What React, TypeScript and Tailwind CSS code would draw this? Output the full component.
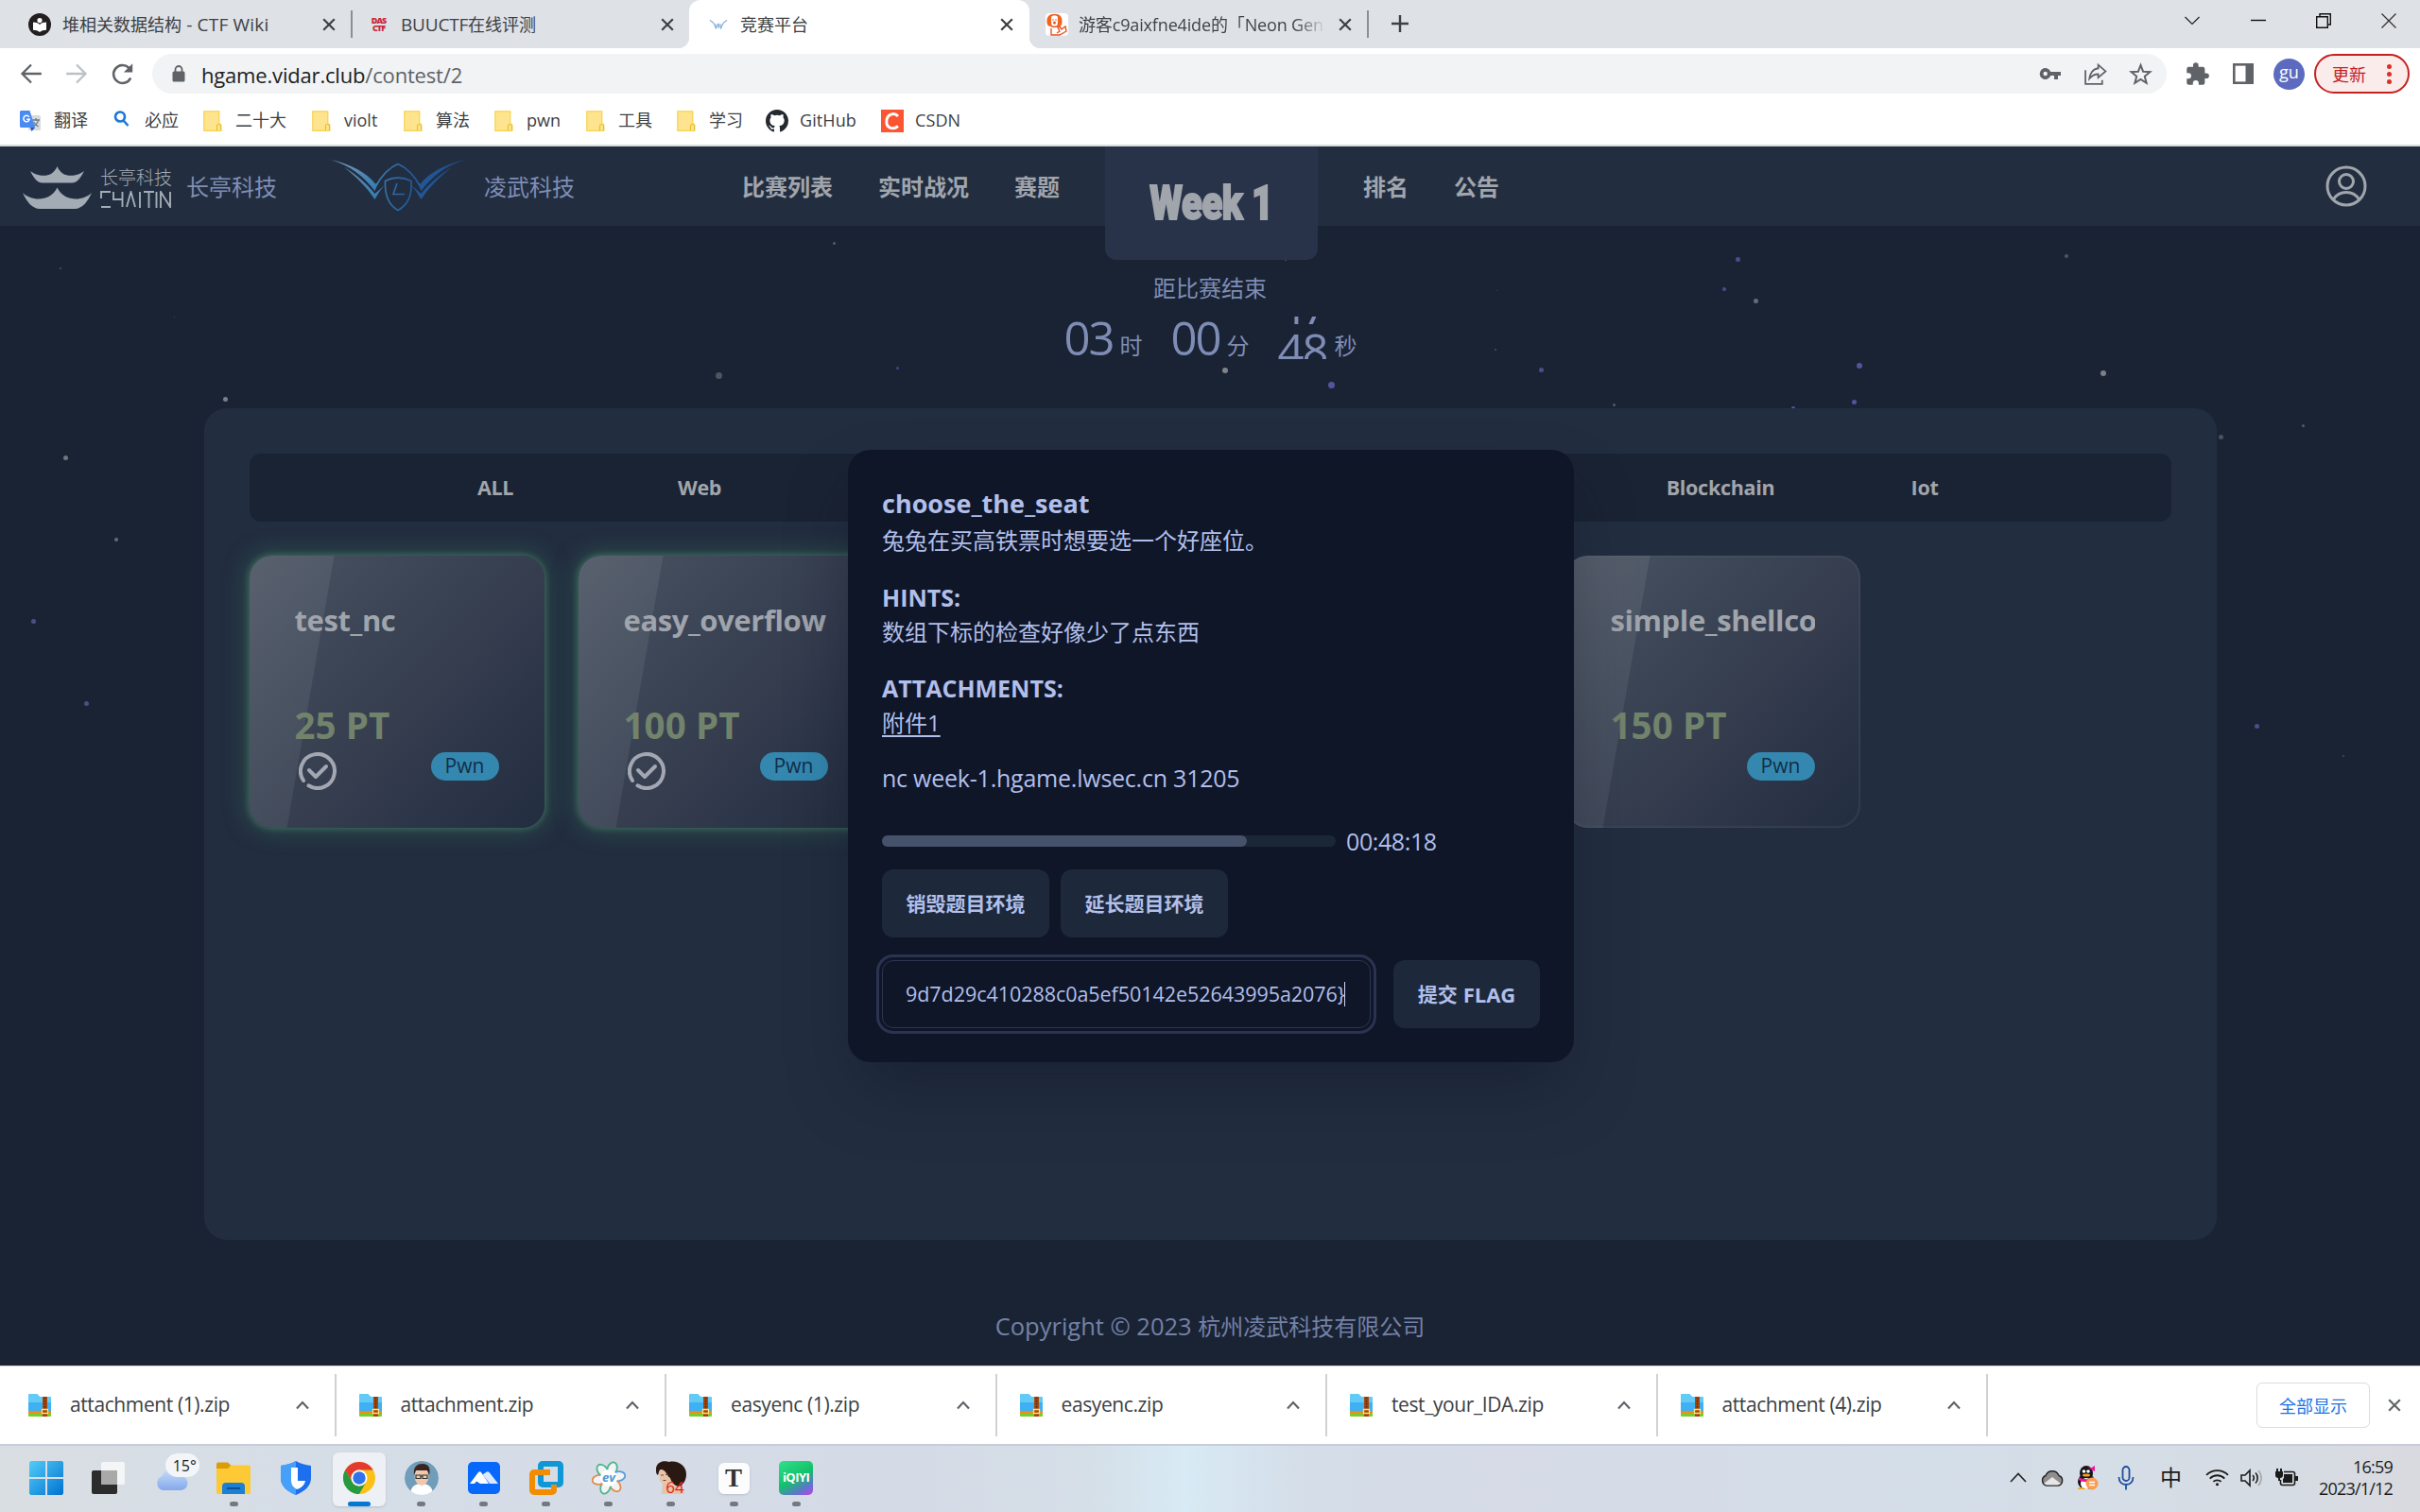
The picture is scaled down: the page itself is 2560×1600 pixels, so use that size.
import React from "react";

/* ---------- browser chrome ---------- */

function Close({ className = "" }: { className?: string }) {
  return (
    <svg viewBox="0 0 14 14" className={"h-3.5 w-3.5 shrink-0 " + className} fill="none" stroke="#3c4043" strokeWidth="2.2">
      <path d="M1.2 1.2 12.8 12.8M12.8 1.2 1.2 12.8" />
    </svg>
  );
}

function WikiIcon() {
  return (
    <svg viewBox="0 0 24 24" className="h-6 w-6 shrink-0">
      <circle cx="12" cy="12" r="12" fill="#231f20" />
      <circle cx="12" cy="7.6" r="2.6" fill="#fff" />
      <path d="M5 9.6c3 0 5 .8 7 2.4 2-1.6 4-2.4 7-2.4v8.2c-3 0-5 .8-7 2.3-2-1.5-4-2.3-7-2.3z" fill="#fff" />
    </svg>
  );
}

function WingMark({ className = "" }: { className?: string }) {
  return (
    <svg viewBox="0 0 22 12" className={"shrink-0 " + className}>
      <path d="M1 1c4 2 6 5 7 9l2-4 1 4 1-4 2 4c1-4 3-7 7-9" fill="none" stroke="#7ba9d8" strokeWidth="1.4" />
      <path d="M7.5 5 11 9.5 14.5 5" fill="none" stroke="#b8d3ee" strokeWidth="1.2" />
    </svg>
  );
}

function PhoneHead() {
  return (
    <svg viewBox="0 0 24 24" className="h-6 w-6 shrink-0">
      <rect width="24" height="24" rx="4" fill="#fff" />
      <circle cx="9.500" cy="8" r="6.500" fill="#fff" stroke="#e8531f" strokeWidth="1.500" />
      <path d="M1.500 10C1 5 3 1.500 7 1 5.500 4 6 9 6.500 13.500 3.500 14.500 1.800 13 1.500 10zM17.500 10C18 5 16 1.500 12 1c1.500 3 1 8 .5 12.500 3 1 4.700-.5 5-3.500z" fill="#f0641e" />
      <circle cx="8" cy="7" r=".8" fill="#e8531f" />
      <circle cx="11" cy="7" r=".8" fill="#e8531f" />
      <circle cx="9.500" cy="10" r="1.500" fill="#e8531f" />
      <path d="M6 16v7h9l7-4-1-5-4 3-2-3-2 1 2 4-3 2" fill="none" stroke="#e8531f" strokeWidth="1.400" />
    </svg>
  );
}

function TabStrip() {
  return (
    <div className="flex h-[51px] items-stretch bg-[#dee1e6] text-[18px] leading-[51px] text-[#3c4043]">
      <div className="flex w-[371px] items-center pl-[30px] pr-4 pt-px">
        <WikiIcon />
        <span className="ml-[12px] w-[272px] whitespace-nowrap">
          堆相关数据结构<span className="text-[19px] tracking-[0.2px]"> - CTF Wiki</span>
        </span>
        <Close className="ml-[3px]" />
      </div>
      <div className="my-[11px] w-[2px] bg-[#8b8e93]" />
      <div className="flex w-[356px] items-center pl-[18px] pr-4 pt-px">
        <span className="flex h-6 w-[19px] flex-col justify-center text-center text-[9px] font-black leading-[8px] tracking-[-1px] text-[#c8243c]">
          <span>DAS</span>
          <span>CTF</span>
        </span>
        <span className="ml-[14px] w-[275px] whitespace-nowrap">
          <span className="text-[19px] tracking-[-0.200px]">BUUCTF</span>在线评测
        </span>
        <Close />
      </div>
      <div className="relative flex w-[360px] items-center rounded-t-[12px] bg-white pl-[21px] pt-px">
        <span className="absolute -left-[12px] bottom-0 h-3 w-3 bg-[radial-gradient(circle_at_0_0,#dee1e6_12px,#fff_12.500px)]" />
        <span className="absolute -right-[12px] bottom-0 h-3 w-3 bg-[radial-gradient(circle_at_100%_0,#dee1e6_12px,#fff_12.500px)]" />
        <WingMark className="h-[12px] w-[20px]" />
        <span className="ml-[13px] w-[275px]">竞赛平台</span>
        <Close />
      </div>
      <div className="flex w-[357px] items-center pl-[17px] pt-px">
        <PhoneHead />
        <span className="ml-[11px] w-[262px] overflow-hidden whitespace-nowrap bg-[linear-gradient(90deg,#3c4043_88%,#dee1e6_100%)] bg-clip-text tracking-[-0.150px] text-transparent">
          游客c9aixfne4ide的「Neon Gen
        </span>
        <Close className="ml-[13px]" />
      </div>
      <div className="my-[11px] w-[2px] bg-[#8b8e93]" />
      <svg viewBox="0 0 18 18" className="ml-[24px] mt-4 h-[18px] w-[18px]" stroke="#3c4043" strokeWidth="2.4">
        <path d="M9 0v18M0 9h18" />
      </svg>
      <div className="ml-auto flex items-start pr-[25px] pt-[14px]">
        <svg viewBox="0 0 16 16" className="mr-[54px] h-4 w-4" fill="none" stroke="#222" strokeWidth="1.2">
          <path d="M.5 4 8 11.500 15.500 4" />
        </svg>
        <svg viewBox="0 0 16 16" className="mr-[53px] h-4 w-4" stroke="#111" strokeWidth="1.400">
          <path d="M0 7.500h16" />
        </svg>
        <svg viewBox="0 0 16 16" className="mr-[53px] h-4 w-4" fill="none" stroke="#111" strokeWidth="1.400">
          <path d="M.7 3.700h11.600v11.600H.7zM4 3.500V.7h11.300V12H12.500" />
        </svg>
        <svg viewBox="0 0 16 16" className="h-4 w-4" stroke="#333" strokeWidth="1.300">
          <path d="M.5.5l15 15M15.500.5l-15 15" />
        </svg>
      </div>
    </div>
  );
}

function Toolbar() {
  return (
    <div className="flex h-[54px] items-center bg-white">
      <svg viewBox="0 0 24 24" className="ml-[20px] h-[26px] w-[26px]" fill="none" stroke="#5f6368" strokeWidth="2.100">
        <path d="M22 12H3.500M12 3.200 3.200 12 12 20.800" />
      </svg>
      <svg viewBox="0 0 24 24" className="ml-[22px] h-[26px] w-[26px]" fill="none" stroke="#bdc0c4" strokeWidth="2.100">
        <path d="M2 12h18.500M12 3.200 20.800 12 12 20.800" />
      </svg>
      <svg viewBox="0 0 24 24" className="ml-[22px] h-[27px] w-[27px]" fill="none" stroke="#5f6368" strokeWidth="2.300">
        <path d="M19.700 15.500A8.400 8.400 0 1 1 18 6l2 2" />
        <path d="M21.500 2v8.300h-8.300z" fill="#5f6368" stroke="none" />
      </svg>
      <div className="ml-[18px] flex h-[42px] w-[2131px] items-center rounded-full bg-[#f1f3f4]">
        <svg viewBox="0 0 14 18" className="ml-[21px] h-[18px] w-[14px]">
          <path d="M3.500 8V4.500a3.500 3.500 0 0 1 7 0V8" fill="none" stroke="#5f6368" strokeWidth="1.800" />
          <rect x=".5" y="6.500" width="13" height="11" rx="1.500" fill="#5f6368" />
        </svg>
        <span className="ml-[17px] pt-[2px] text-[22px] tracking-[-0.180px] text-[#202124]">
          hgame.vidar.club<span className="text-[#5f6368]">/contest/2</span>
        </span>
        <div className="ml-auto flex items-center gap-[23px] pr-[15px]">
          <svg viewBox="0 0 24 24" className="h-[24px] w-[24px]" fill="#5f6368">
            <path fillRule="evenodd" d="M12.300 10a6 6 0 1 0 0 4H16v4h4v-4h3v-4zM6.700 14.200a2.200 2.200 0 1 1 0-4.400 2.200 2.200 0 0 1 0 4.400z" />
          </svg>
          <svg viewBox="0 0 24 24" className="h-[25px] w-[25px]" fill="none" stroke="#5f6368" strokeWidth="1.700">
            <path d="M2 8v14h17v-4" />
            <path d="M15 2.500 22.500 9 15 15.500V12c-4 0-6.500 1.500-9 4.500.5-5 3.500-10 9-10.500z" />
          </svg>
          <svg viewBox="0 0 24 24" className="h-[25px] w-[25px]" fill="none" stroke="#5f6368" strokeWidth="1.900">
            <path d="m12 2.800 2.500 6.500 7 .4-5.400 4.500 1.800 6.800L12 17.200 6.100 21l1.800-6.800-5.400-4.500 7-.4z" />
          </svg>
        </div>
      </div>
      <svg viewBox="0 0 24 24" className="ml-[19px] h-[27px] w-[27px]" fill="#5f6368">
        <path d="M20.500 11H19V7a2 2 0 0 0-2-2h-4V3.500a2.500 2.500 0 0 0-5 0V5H4a2 2 0 0 0-2 2v3.800h1.500a2.700 2.700 0 0 1 0 5.400H2V20a2 2 0 0 0 2 2h3.800v-1.500a2.700 2.700 0 0 1 5.400 0V22H17a2 2 0 0 0 2-2v-4h1.500a2.500 2.500 0 0 0 0-5z" />
      </svg>
      <svg viewBox="0 0 22 22" className="ml-[24px] h-[22px] w-[22px]">
        <rect x="1.300" y="1.300" width="19.400" height="19.400" fill="none" stroke="#5f6368" strokeWidth="2.600" />
        <rect x="13.500" y="1" width="8" height="20" fill="#5f6368" />
      </svg>
      <div className="ml-[21px] flex h-[33px] w-[33px] items-center justify-center rounded-full bg-[#5c6bc0] pb-[3px] text-[18px] text-white">gu</div>
      <div className="ml-[10px] flex h-[42px] w-[101px] items-center rounded-full border-2 border-[#c5221f] bg-[#faeceb] pl-[17px] text-[18px] text-[#c5221f]">
        <span className="pt-[2px]">更新</span>
        <div className="ml-[22px] flex flex-col gap-[3px]">
          <i className="h-[5px] w-[5px] rounded-full bg-[#d93025]" />
          <i className="h-[5px] w-[5px] rounded-full bg-[#d93025]" />
          <i className="h-[5px] w-[5px] rounded-full bg-[#d93025]" />
        </div>
      </div>
    </div>
  );
}

function Folder() {
  return (
    <svg viewBox="0 0 20 22" className="mr-[14px] h-[22px] w-[20px] shrink-0">
      <path d="M.8.8h16v12.500l2 2v6H.8z" fill="#ffe48f" stroke="#f6d34e" strokeWidth="1.200" />
      <path d="M14.500 21v-4.500a2 2 0 0 1 4 0V21" fill="#ffe48f" stroke="#e6bf35" strokeWidth="1.200" />
    </svg>
  );
}

function Bookmarks() {
  return (
    <div className="flex h-[48px] items-center bg-white pb-[3px] pl-[21px] text-[18px] text-[#3c4043]">
      <div className="flex w-[99px] items-center">
        <svg viewBox="0 0 22 22" className="mr-[14px] h-[22px] w-[22px]">
          <rect x="9" y="5" width="13" height="16" rx="1.500" fill="#d9dadc" />
          <path d="M13 10h8M17 8v2M19.500 10c-.5 3-2.500 5-5 6.500M14.500 12c1 2 3 4 5 5" stroke="#6b7a90" strokeWidth="1.300" fill="none" />
          <path d="M1.500 0h9L16 18H1.500A1.500 1.500 0 0 1 0 16.500v-15A1.500 1.500 0 0 1 1.500 0z" fill="#4a8af4" />
          <path d="m11 18 1.500 4L16 18z" fill="#2a56c6" />
          <path d="M9.800 6.800A3.200 3.200 0 1 0 10.200 9.300H7.200" stroke="#fff" strokeWidth="1.500" fill="none" />
        </svg>
        翻译
      </div>
      <div className="flex w-[95px] items-center">
        <svg viewBox="0 0 17 17" className="mb-[4px] mr-[16px] h-[17px] w-[17px]" fill="none" stroke="#1b78d0" strokeWidth="2.600">
          <circle cx="7" cy="6.500" r="5" />
          <path d="m10.500 10.500 5 5.500" />
        </svg>
        必应
      </div>
      <div className="flex w-[115px] items-center"><Folder />二十大</div>
      <div className="flex w-[97px] items-center"><Folder />violt</div>
      <div className="flex w-[96px] items-center"><Folder />算法</div>
      <div className="flex w-[97px] items-center"><Folder />pwn</div>
      <div className="flex w-[96px] items-center"><Folder />工具</div>
      <div className="flex w-[94px] items-center"><Folder />学习</div>
      <div className="flex w-[122px] items-center tracking-[0.1px]">
        <svg viewBox="0 0 16 16" className="mr-[12px] h-6 w-6" fill="#24292f">
          <path d="M8 0C3.580 0 0 3.580 0 8c0 3.540 2.290 6.530 5.470 7.590.4.070.55-.17.55-.38 0-.19-.01-.82-.01-1.490-2.010.37-2.530-.49-2.690-.94-.09-.23-.48-.94-.82-1.130-.28-.15-.68-.52-.01-.53.63-.01 1.080.58 1.230.82.72 1.210 1.870.87 2.330.66.07-.52.28-.87.51-1.070-1.780-.2-3.640-.89-3.640-3.950 0-.87.31-1.590.82-2.150-.08-.2-.36-1.020.08-2.120 0 0 .67-.21 2.200.82a7.600 7.600 0 0 1 4 0c1.530-1.040 2.200-.82 2.200-.82.44 1.100.16 1.920.08 2.120.51.56.82 1.270.82 2.150 0 3.070-1.870 3.750-3.650 3.950.29.25.54.73.54 1.480 0 1.070-.01 1.930-.01 2.200 0 .21.15.46.55.38A8.010 8.010 0 0 0 16 8c0-4.420-3.580-8-8-8z" />
        </svg>
        GitHub
      </div>
      <div className="flex items-center tracking-[0.1px]">
        <svg viewBox="0 0 24 24" className="mr-[12px] h-6 w-6">
          <rect width="24" height="24" fill="#fc5531" />
          <path d="M18 7C14 2.500 6 4.500 5.800 12.500 5.600 20 13 21.500 18 17.500" fill="none" stroke="#fff" strokeWidth="3" />
        </svg>
        CSDN
      </div>
    </div>
  );
}

/* ---------- contest page ---------- */

const stars: [number, number, number, string][] = [
  [882, 257, 3, "#555b68"], [64, 284, 2, "#4a5160"], [184, 335, 1, "#4a5160"], [238, 422, 5, "#7d7f86"],
  [69, 484, 5, "#71757e"], [123, 571, 4, "#666b76"], [35, 657, 5, "#4a4f8c"], [91, 744, 5, "#4a4f8c"],
  [760, 397, 7, "#50545e"], [949, 389, 3, "#3f4880"], [1296, 392, 6, "#7e828b"], [1408, 407, 7, "#55549a"],
  [1630, 391, 5, "#4b4d8c"], [1582, 370, 2, "#4a5160"], [1583, 307, 1, "#4a5160"], [1360, 275, 2, "#555b68"],
  [1838, 274, 5, "#4b4d8c"], [1824, 306, 4, "#4b4d8c"], [1857, 318, 5, "#666b76"], [1967, 387, 6, "#55549a"],
  [1961, 425, 5, "#55549a"], [1897, 432, 4, "#55549a"], [1707, 428, 3, "#555b68"], [2186, 271, 4, "#50545e"],
  [2225, 395, 6, "#7d7f86"], [2436, 450, 3, "#555b68"], [2349, 462, 5, "#4c515c"], [2387, 768, 5, "#4b4d8c"],
  [2479, 800, 2, "#4a5160"],
];

function ChaitinLogo() {
  return (
    <div className="flex items-center text-[#a3abb4]">
      <svg viewBox="0 0 73 45" className="h-[45px] w-[73px]" fill="currentColor">
        <path d="M8 5C15 10.500 31 14 36.500 0 42 14 58 10.500 65 5 62 11 58 17.500 52 17.500H21C15 17.500 11 11 8 5z" />
        <path d="M0 28C9 37 29 38 36.500 22.500 44 38 64 37 73 28 69 37 63 45 55 45H18C10 45 4 37 0 28z" />
      </svg>
      <div className="ml-[9px] flex w-[76px] flex-col">
        <span className="whitespace-nowrap text-[19px] font-light leading-[23px]">长亭科技</span>
        <svg viewBox="0 0 76 18" className="mt-[2px] h-[18px] w-[76px]" fill="none" stroke="currentColor" strokeWidth="1.900">
          <path d="M11 1H1v7M1 17h10M14 1v8h9M23.500 1v16M28 17 32.500 1 37 17M42 1v17M46 1h11M51.500 1v17M59.500 1v17M64 18V1l10 16V1" />
        </svg>
      </div>
    </div>
  );
}

function LingwuLogo() {
  return (
    <svg viewBox="0 0 142 56" className="h-[56px] w-[142px]">
      <defs>
        <linearGradient id="wing" gradientUnits="userSpaceOnUse" x1="0" x2="142" y1="0" y2="20">
          <stop offset="0" stopColor="#8296b4" />
          <stop offset="0.320" stopColor="#3f82b4" />
          <stop offset="0.600" stopColor="#225c9e" />
          <stop offset="1" stopColor="#1e4a88" />
        </linearGradient>
      </defs>
      <g fill="url(#wing)">
        <path d="M0 0C22 5 38 14 47 25.500L50 24.500 46.500 33C35 18 22 7 0 0z" />
        <path d="M142 0C120 5 104 14 95 25.500L92 24.500 95.500 33C107 18 120 7 142 0z" />
        <path d="M14 8C26 15 38 25 46.500 36L57 27C53 31 50 36 46.500 42 38 29 27 18 14 8z" />
        <path d="M128 8C116 15 104 25 95.500 36L85 27C89 31 92 36 95.500 42 104 29 115 18 128 8z" />
      </g>
      <g fill="none" stroke="url(#wing)" strokeWidth="1.600">
        <path d="M47 29C53 18 60 9 71 4.500 82 9 89 18 95 29" />
        <path d="M57.500 22.500c9-4.500 18-4.500 27.500 0 1 13-3 25-14 31-11-6-14-18-13.500-31z" />
        <path d="m70 25-4 11.500h12" />
      </g>
    </svg>
  );
}

function Header() {
  return (
    <header className="relative z-10 flex h-[84px] items-center bg-[#222e40] text-[24px] text-[#7f8db5]">
      <div className="ml-[24px] pt-[2px]"><ChaitinLogo /></div>
      <span className="ml-[15px] pt-px">长亭科技</span>
      <div className="ml-[57px]"><LingwuLogo /></div>
      <span className="ml-[20px] pt-px">凌武科技</span>
      <nav className="ml-[177px] flex items-center self-stretch font-bold text-[#a1a5ac]">
        <span className="pt-px">比赛列表</span>
        <span className="ml-[48px] pt-px">实时战况</span>
        <span className="ml-[48px] pt-px">赛题</span>
        <div className="ml-[48px] flex h-[120px] w-[225px] items-center justify-center self-start rounded-b-[12px] bg-[#283349]">
          <span className="scale-x-[0.800] whitespace-nowrap font-['Roboto'] text-[50px] font-black leading-none tracking-[-0.500px] [-webkit-text-stroke:2px_#a1a5ac]">Week 1</span>
        </div>
        <span className="ml-[48px] pt-px">排名</span>
        <span className="ml-[48px] pt-px">公告</span>
      </nav>
      <svg viewBox="0 0 44 44" className="ml-auto mr-[56px] h-[44px] w-[44px]" fill="none" stroke="#a1a5ac" strokeWidth="3">
        <circle cx="22" cy="22" r="20" />
        <circle cx="22" cy="17" r="7.500" />
        <path d="M8.500 36c3-5 7.500-7.500 13.500-7.500S32.500 31 35.500 36" />
      </svg>
    </header>
  );
}

function Countdown() {
  return (
    <div className="relative flex h-[141px] flex-col items-center text-[#7f8db5]">
      <span className="mt-[48px] text-[24px] leading-[36px]">距比赛结束</span>
      <div className="mt-[11px] flex items-start pl-px">
        <span className="w-[52px] text-center text-[49px] leading-[46px] tracking-[-2px]">03</span>
        <span className="ml-[7px] mt-[14px] text-[24px] leading-[36px]">时</span>
        <span className="ml-[30px] w-[52px] text-center text-[49px] leading-[46px] tracking-[-2px]">00</span>
        <span className="ml-[7px] mt-[14px] text-[24px] leading-[36px]">分</span>
        <span className="ml-[29px] mt-px h-[45px] w-[54px] overflow-hidden text-center text-[49px] leading-[46px] tracking-[-2px]">
          <span className="-mt-[34px] block h-[46px] overflow-hidden">47</span>
          <span className="block">48</span>
        </span>
        <span className="ml-[7px] mt-[14px] text-[24px] leading-[36px]">秒</span>
      </div>
    </div>
  );
}

function ChallengeCard({ name, points, solved, className = "" }: { name: string; points: string; solved?: boolean; className?: string }) {
  return (
    <div
      className={
        "relative h-[288px] w-[312px] overflow-visible rounded-[24px] bg-[linear-gradient(133deg,#4b5463_0%,#3d4757_30%,#343c4e_58%,#222d3f_100%)] " +
        (solved ? "shadow-[0_0_6px_1px_#3d6b5c,0_0_22px_4px_#35605499] " : "shadow-[inset_0_0_3px_1px_#56606d80] ") +
        className
      }
    >
      <div className="absolute inset-0 rounded-[24px] bg-[linear-gradient(120deg,#ffffff14,#ffffff0c)] [clip-path:polygon(0_0,90px_0,40px_100%,0_100%)]" />
      <div className="relative flex h-full flex-col px-[48px] pt-[47px]">
        <span className="overflow-hidden whitespace-nowrap text-[31px] font-bold leading-[42px] tracking-[-0.400px] text-[#a0a4ac]">{name}</span>
        <span className="mt-[65px] text-[38.500px] font-bold leading-[50px] tracking-[0.100px] text-[#72836c]">{points}</span>
        <div className="mt-[4px] flex items-start justify-between">
          {solved ? (
            <svg viewBox="0 0 40 40" className="ml-[4px] h-[40px] w-[40px]" fill="none" stroke="#a3a7b2" strokeWidth="4" strokeLinecap="round" strokeLinejoin="round">
              <path d="M5 30A18 18 0 1 1 10.500 35.300" />
              <path d="m11 19 7 7 11-11" />
            </svg>
          ) : (
            <span />
          )}
          <span className="flex h-[30px] w-[72px] items-center justify-center rounded-full bg-[#3488b0] text-[21px] text-[#122e49]">Pwn</span>
        </div>
      </div>
    </div>
  );
}

function ChallengeModal() {
  return (
    <div className="absolute left-[897px] top-[321px] z-20 flex h-[648px] w-[768px] flex-col rounded-[24px] bg-[#0f1628] px-[36px] pt-[37px] text-[24px] leading-[36px] text-[#b1bfea] shadow-[0_36px_72px_-10px_rgba(15,20,35,0.450)]">
      <h2 className="text-[27px] font-bold leading-[40px]">choose_the_seat</h2>
      <p className="mt-px">兔兔在买高铁票时想要选一个好座位。</p>
      <h3 className="mt-[24px] text-[25px] font-bold">HINTS:</h3>
      <p className="mt-px">数组下标的检查好像少了点东西</p>
      <h3 className="mt-[23px] text-[25px] font-bold">ATTACHMENTS:</h3>
      <p className="mt-px"><span className="underline underline-offset-4">附件1</span></p>
      <p className="mt-[22px] text-[25px] tracking-[-0.230px]">nc week-1.hgame.lwsec.cn 31205</p>
      <div className="mt-[31px] flex items-center">
        <div className="h-[12px] w-[480px] rounded-full bg-[#1b2637]">
          <div className="h-full w-[386px] rounded-full bg-[#46526b]" />
        </div>
        <span className="ml-[11px] text-[25px] tracking-[-0.400px]">00:48:18</span>
      </div>
      <div className="mt-[12px] flex gap-[12px] text-[21px] font-bold">
        <div className="flex h-[72px] w-[177px] items-center justify-center rounded-[12px] bg-[#1d293a]">销毁题目环境</div>
        <div className="flex h-[72px] w-[177px] items-center justify-center rounded-[12px] bg-[#1d293a]">延长题目环境</div>
      </div>
      <div className="mt-[24px] flex gap-[24px] text-[21px]">
        <div className="flex h-[72px] w-[517px] items-center rounded-[12px] border border-[#2c3651] pl-[24px] outline-[3px] outline-offset-[3px] outline-[#2a3350] outline-solid">
          <span className="whitespace-nowrap text-[21.500px] tracking-[-0.050px]">9d7d29c410288c0a5ef50142e52643995a2076&#125;</span>
          <i className="-ml-px h-[26px] w-[1.500px] bg-[#cdd6f5]" />
        </div>
        <div className="flex h-[72px] w-[155px] items-center justify-center whitespace-nowrap rounded-[12px] bg-[#1d293a] font-bold">提交<span className="pl-[6px] text-[22px]">FLAG</span></div>
      </div>
    </div>
  );
}

function ContestPage() {
  return (
    <main className="relative h-[1290px] overflow-hidden bg-[#1a2334]">
      {stars.map(([x, y, d, c], i) => (
        <i key={i} className="absolute rounded-full" style={{ left: x - d / 2, top: y - 155 - d / 2, width: d, height: d, background: c }} />
      ))}
      <Header />
      <Countdown />
      <section className="relative mx-auto mt-[52px] h-[880px] w-[2129px] rounded-[24px] bg-[#222e40] p-[48px]">
        <div className="grid h-[72px] grid-cols-[repeat(8,216px)] items-center justify-center rounded-[12px] bg-[#1a2333] text-center text-[21.500px] font-bold tracking-[-0.300px] text-[#a1a5ac]">
          <span>ALL</span>
          <span>Web</span>
          <span className="col-start-7">Blockchain</span>
          <span>Iot</span>
        </div>
        <div className="mt-[36px] grid grid-cols-[repeat(5,312px)] gap-[36px]">
          <ChallengeCard name="test_nc" points="25 PT" solved />
          <ChallengeCard name="easy_overflow" points="100 PT" solved />
          <ChallengeCard name="simple_shellco" points="150 PT" className="col-start-5" />
        </div>
      </section>
      <footer className="mt-[73px] text-center text-[24px] leading-[36px] text-[#7481a6]"><span className="text-[25.500px]">Copyright © 2023 </span>杭州凌武科技有限公司</footer>
      <ChallengeModal />
    </main>
  );
}

/* ---------- download shelf ---------- */

function ZipIcon() {
  return (
    <svg viewBox="0 0 24 24" className="h-6 w-6 shrink-0">
      <path d="M0 1.500A1.500 1.500 0 0 1 1.500 0H9l3 3h10.500A1.500 1.500 0 0 1 24 4.500V19H0z" fill="#3fb0f2" />
      <path d="M0 1.500A1.500 1.500 0 0 1 1.500 0H9l3 3h10.500A1.500 1.500 0 0 1 24 4.500V9H0z" fill="#62caf6" />
      <path d="M0 18h24v3H0z" fill="#f58a12" />
      <path d="M0 20.500h24V23a1 1 0 0 1-1 1H1a1 1 0 0 1-1-1z" fill="#7ccb2c" />
      <path d="M15 3h5v21h-5z" fill="#a4460c" />
      <path d="M17.500 4v12" stroke="#5e2606" strokeWidth="1.500" strokeDasharray="1.500 1.500" />
      <path d="M14.500 16.500h6v4h-6z" fill="none" stroke="#ffe27a" strokeWidth="1.300" />
    </svg>
  );
}

function DownloadShelf() {
  const files = ["attachment (1).zip", "attachment.zip", "easyenc (1).zip", "easyenc.zip", "test_your_IDA.zip", "attachment (4).zip"];
  return (
    <div className="flex h-[83px] items-center border-t border-[#d2d5da] bg-white pl-[6px] text-[21px] text-[#3c4043]">
      {files.map((f) => (
        <div key={f} className="flex h-[66px] w-[349.500px] shrink-0 items-center border-r-2 border-[#cfd1d4] pl-[24px] pr-[27px]">
          <ZipIcon />
          <span className="ml-[20px] tracking-[-0.400px]">{f}</span>
          <svg viewBox="0 0 14 10" className="ml-auto h-[10px] w-[14px]" fill="none" stroke="#5f6368" strokeWidth="2.200">
            <path d="M1 8.500 7 2l6 6.500" />
          </svg>
        </div>
      ))}
      <div className="ml-auto flex h-[48px] w-[120px] items-center justify-center rounded-[6px] border-[1.500px] border-[#dadce0] pt-[2px] text-[18px] text-[#1a73e8]">全部显示</div>
      <Close className="ml-[19px] mr-[20px] opacity-80" />
    </div>
  );
}

/* ---------- taskbar ---------- */

function Slot({ children, dot, active }: { children: React.ReactNode; dot?: boolean; active?: boolean }) {
  return (
    <div className="flex h-full w-[66.100px] flex-col items-center">
      <div className={"mt-[7px] flex h-[57px] w-[56px] items-center justify-center rounded-[6px] pb-[3px] " + (active ? "bg-[#edf0f4] shadow-sm" : "")}>{children}</div>
      {dot && <i className="-mt-[5px] h-[5px] w-[9px] rounded-full bg-[#75797f]" />}
      {active && <i className="-mt-[5px] h-[5px] w-[24px] rounded-full bg-[#0078d4]" />}
    </div>
  );
}

function Taskbar() {
  return (
    <div className="flex h-[72px] border-t-2 border-[#c6cdd9] bg-[linear-gradient(90deg,#d9dee2_0%,#d5dde7_14%,#d5dbe6_38%,#d5dfe8_45%,#d8eaf5_49%,#d4dde8_54%,#d6dbe7_62%,#d4dee8_80%,#d6dce4_94%,#d9dadf_100%)] pl-[16px]">
      <Slot>
        <svg viewBox="0 0 36 36" className="h-[36px] w-[36px]">
          <defs>
            <linearGradient id="win" x1="0" y1="0" x2="1" y2="1">
              <stop offset="0" stopColor="#53cdf9" />
              <stop offset="1" stopColor="#0072cf" />
            </linearGradient>
          </defs>
          <path d="M1.500 0H17v17H0V1.500zM19 0h15.500L36 1.500V17H19zM0 19h17v17H1.500L0 34.500zM19 19h17v15.500L34.500 36H19z" fill="url(#win)" />
        </svg>
      </Slot>
      <Slot>
        <svg viewBox="0 0 36 36" className="h-[36px] w-[36px]">
          <rect x="10" y="1" width="25" height="24" rx="2" fill="#f4f5f6" />
          <rect x="0" y="10" width="27" height="25" rx="2" fill="#2c2c2c" />
          <path d="M10 10h17v15H10z" fill="#a9a9a9" />
        </svg>
      </Slot>
      <Slot>
        <div className="relative h-full w-full">
          <svg viewBox="0 0 36 24" className="absolute left-[10px] top-[16px] h-[24px] w-[37px]">
            <defs>
              <linearGradient id="cl" x1="0" y1="0" x2="0" y2="1">
                <stop offset="0" stopColor="#c8dcf8" />
                <stop offset="1" stopColor="#83a9ec" />
              </linearGradient>
            </defs>
            <path d="M8 24a8 8 0 0 1 0-15 10 10 0 0 1 19 0 7.500 7.500 0 0 1 1 15z" fill="url(#cl)" />
          </svg>
          <span className="absolute top-[1px] left-[22px] flex h-[25px] w-[36px] items-center justify-center rounded-full bg-[#f3f5f8] pl-1 text-[16px] text-[#222]">15°</span>
        </div>
      </Slot>
      <Slot dot>
        <svg viewBox="0 0 36 34" className="h-[34px] w-[36px]">
          <path d="M0 2.500A2 2 0 0 1 2 .5h10l4 4-3 3H0z" fill="#dc9c08" />
          <path d="M0 7h12l3.500-3.500H34a2 2 0 0 1 2 2V32a2 2 0 0 1-2 2H2a2 2 0 0 1-2-2z" fill="#fdc934" />
          <path d="M6 34V26a4 4 0 0 1 4-4h16a4 4 0 0 1 4 4v8z" fill="#1b7fd4" />
          <path d="M11 28h14" stroke="#0c4f93" strokeWidth="2" />
        </svg>
      </Slot>
      <Slot>
        <svg viewBox="0 0 34 36" className="h-[36px] w-[34px]">
          <path d="M17 0c5 3 10 4 16 5v13c0 9-7 14-16 18C8 32 1 27 1 18V5c6-1 11-2 16-5z" fill="#1c6fee" />
          <path d="M17 0v36C8 32 1 27 1 18V5c6-1 11-2 16-5z" fill="#45a0fa" />
          <path d="M12 7h7v14h8c-1 5-5 8-9 9-4-2-6-5-6-9z" fill="#fff" />
        </svg>
      </Slot>
      <Slot active>
        <svg viewBox="0 0 34 34" className="h-[34px] w-[34px]">
          <circle cx="17" cy="17" r="17" fill="#fbc116" />
          <path d="M2.280 8.500A17 17 0 0 1 31.700 8.500H17a8.500 8.500 0 0 0-7.400 12.700z" fill="#e33b2e" />
          <path d="M2.280 8.500A17 17 0 0 0 17 34l7.400-12.700A8.500 8.500 0 0 1 9.600 21.200z" fill="#249a41" />
          <circle cx="17" cy="17" r="8.500" fill="#fff" />
          <circle cx="17" cy="17" r="6.700" fill="#2f74ea" />
        </svg>
      </Slot>
      <Slot dot>
        <svg viewBox="0 0 36 36" className="h-[36px] w-[36px]">
          <defs><clipPath id="av"><circle cx="18" cy="18" r="18" /></clipPath></defs>
          <g clipPath="url(#av)">
            <circle cx="18" cy="18" r="18" fill="#6f9dba" />
            <path d="M6 36c0-8 4-12 12-12s12 4 12 12z" fill="#fff" />
            <ellipse cx="18" cy="16" rx="7.500" ry="10" fill="#f0c8ae" />
            <path d="M10 15C9 6 13 3 19 3c6 0 9 4 7 12l-2-5H12z" fill="#3a2420" />
            <path d="M12 15h5v3.500h-5zM19 15h5v3.500h-5zM17 16h2" fill="none" stroke="#333" strokeWidth="1.200" />
          </g>
        </svg>
      </Slot>
      <Slot dot>
        <svg viewBox="0 0 34 34" className="h-[34px] w-[34px]">
          <rect width="34" height="34" rx="5" fill="#0868fb" />
          <path d="M2 23 11 11q1.500-1.500 3 0l8 12H13l-4-2.500L7 23z" fill="#fff" />
          <path d="M15.500 13.500 19 11q2-1.500 3.500 0L32 23h-9z" fill="#dbe9ff" />
        </svg>
      </Slot>
      <Slot dot>
        <svg viewBox="0 0 36 36" className="h-[36px] w-[36px]" fill="none" strokeWidth="6">
          <rect x="12" y="3" width="21" height="22" rx="2" stroke="#0f97d6" />
          <path d="M26 25v6a2 2 0 0 1-2 2H5a2 2 0 0 1-2-2V14a2 2 0 0 1 2-2h17" stroke="#f28c00" />
        </svg>
      </Slot>
      <Slot dot>
        <svg viewBox="0 0 36 36" className="h-[36px] w-[36px]" fill="#ffffffaa" strokeWidth="1.800">
          <ellipse cx="18" cy="8" rx="5" ry="7.500" stroke="#4fb58a" transform="rotate(20 18 18)" />
          <ellipse cx="18" cy="8" rx="5" ry="7.500" stroke="#5a9bd8" transform="rotate(80 18 18)" />
          <ellipse cx="18" cy="8" rx="5" ry="7.500" stroke="#e08b4a" transform="rotate(140 18 18)" />
          <ellipse cx="18" cy="8" rx="5" ry="7.500" stroke="#4fb58a" transform="rotate(200 18 18)" />
          <ellipse cx="18" cy="8" rx="5" ry="7.500" stroke="#e08b4a" transform="rotate(260 18 18)" />
          <ellipse cx="18" cy="8" rx="5" ry="7.500" stroke="#4fb58a" transform="rotate(320 18 18)" />
          <circle cx="18" cy="18" r="9" fill="#fff" stroke="none" />
          <text x="18" y="22" fontSize="13" fontStyle="italic" fontWeight="700" textAnchor="middle" fill="#4c9ad6" stroke="none">ev</text>
        </svg>
      </Slot>
      <Slot dot>
        <svg viewBox="0 0 34 36" className="h-[36px] w-[34px]">
          <path d="M7 34 8 24 5 21 4 12C5 6 10 4 15 7l3 14 11 7 2 7H6z" fill="#e6c4a8" />
          <path d="M1 9C1 1 9-1 15 1c9-2 18 4 18 13 0 7-4 12-8 13-5-1-8-5-9-9-4-2-4-9-10-9-2 0-2 4-3 6C1 14 1 12 1 9z" fill="#2a1912" />
          <path d="M6 15h3M11 14.500h3M8.500 20.500h3" stroke="#7a4630" strokeWidth="1" />
          <text x="21" y="34" fontSize="17" fontWeight="500" textAnchor="middle" fill="#e3221b">64</text>
        </svg>
      </Slot>
      <Slot dot>
        <div className="flex h-[33px] w-[33px] items-center justify-center rounded-[6px] bg-[#fcfcfc] font-['Liberation_Serif'] text-[27px] font-bold text-[#333] shadow">T</div>
      </Slot>
      <Slot dot>
        <div className="flex h-[36px] w-[36px] items-center justify-center rounded-[5px] bg-[linear-gradient(150deg,#2fe28c_0%,#14c169_50%,#5a78c8_78%,#c83cf0_100%)] text-[13px] font-bold tracking-[-0.500px] text-white">iQIYI</div>
      </Slot>

      <div className="ml-auto flex items-center pb-[3px] pr-[29px]">
        <svg viewBox="0 0 18 11" className="h-[11px] w-[18px]" fill="none" stroke="#222" strokeWidth="1.600">
          <path d="m1 10 8-8.500L17 10" />
        </svg>
        <svg viewBox="0 0 24 18" className="ml-[15px] h-[18px] w-[24px]">
          <path d="M6 17a5.500 5.500 0 0 1-1-10.500 7.500 7.500 0 0 1 14 0A5.500 5.500 0 0 1 18.500 17z" fill="#8e8e8e" stroke="#222" strokeWidth="1.400" />
          <path d="M3 15 12 8l9 7-3 1.500H6z" fill="#e6e6e6" />
        </svg>
        <svg viewBox="0 0 24 26" className="ml-[13px] h-[26px] w-[24px]">
          <ellipse cx="11" cy="8" rx="7" ry="8" fill="#15151b" />
          <ellipse cx="11" cy="17" rx="9" ry="8" fill="#15151b" />
          <ellipse cx="11" cy="19" rx="6" ry="6" fill="#fff" />
          <circle cx="8.500" cy="6" r="1.800" fill="#fff" />
          <circle cx="13" cy="6" r="1.800" fill="#fff" />
          <ellipse cx="11" cy="10" rx="4" ry="1.500" fill="#f5a21c" />
          <path d="M3 12c5 3 11 3 16 0v3c-5 3-11 3-16 0z" fill="#f0149b" />
          <path d="m12 1 4 1.500L20 0v6l-4-2z" fill="#f0149b" />
          <path d="M2 25a4 2 0 0 1 8 0z" fill="#f5a21c" />
          <circle cx="17" cy="19" r="6.500" fill="#fb9d50" />
          <path d="M14 17.500h6M14 20.500h6" stroke="#fff" strokeWidth="1.500" />
        </svg>
        <svg viewBox="0 0 18 26" className="ml-[20px] h-[26px] w-[18px]" fill="none" stroke="#1d4f9e" strokeWidth="1.800">
          <rect x="5.500" y="1" width="7" height="15" rx="3.500" />
          <path d="M1.500 12c0 5 3 8 7.500 8s7.500-3 7.500-8M9 20v5.500" />
        </svg>
        <span className="ml-[27px] text-[23px] leading-none text-[#1b1b1b]">中</span>
        <svg viewBox="0 0 24 18" className="ml-[25px] h-[19px] w-[25px]" fill="none" stroke="#1b1b1b" strokeWidth="1.700">
          <path d="M1 6.500a15.500 15.500 0 0 1 22 0M4.500 10a10.500 10.500 0 0 1 15 0M8 13.300a5.800 5.800 0 0 1 8 0" />
          <circle cx="12" cy="16" r="1.500" fill="#1b1b1b" stroke="none" />
        </svg>
        <svg viewBox="0 0 24 20" className="ml-[12px] h-[20px] w-[24px]" fill="none" stroke="#1b1b1b" strokeWidth="1.600">
          <path d="M1 7v6h4l5 5V2L5 7z" />
          <path d="M13 7a4.500 4.500 0 0 1 0 6M16 4.500a8 8 0 0 1 0 11" />
          <path d="M19 2a12 12 0 0 1 0 16" stroke="#a5a8ad" />
        </svg>
        <svg viewBox="0 0 24 20" className="ml-[13px] h-[20px] w-[24px]" fill="#1b1b1b">
          <path d="M9 3.500h9.500a2 2 0 0 1 2 2v10a2 2 0 0 1-2 2h-11a2 2 0 0 1-2-2V12" fill="none" stroke="#1b1b1b" strokeWidth="1.600" />
          <path d="M9 6h9v9H8v-4l1-1zM21 8h3v5h-3zM0 3h8v4a3 3 0 0 1-3 3v3H3v-3a3 3 0 0 1-3-3zM1 0h2v3H1zM5 0h2v3H5z" />
        </svg>
        <div className="ml-[22px] text-right text-[18px] leading-[23px] tracking-[-0.800px] text-[#1b1b1b]">
          <div>16:59</div>
          <div>2023/1/12</div>
        </div>
      </div>
    </div>
  );
}

export default function App() {
  return (
    <div className="h-[1600px] w-[2560px] overflow-hidden bg-white font-['Open_Sans','Noto_Sans_CJK_SC',sans-serif]">
      <TabStrip />
      <Toolbar />
      <Bookmarks />
      <div className="h-[2px] bg-[#dadbdd]" />
      <ContestPage />
      <DownloadShelf />
      <Taskbar />
    </div>
  );
}
